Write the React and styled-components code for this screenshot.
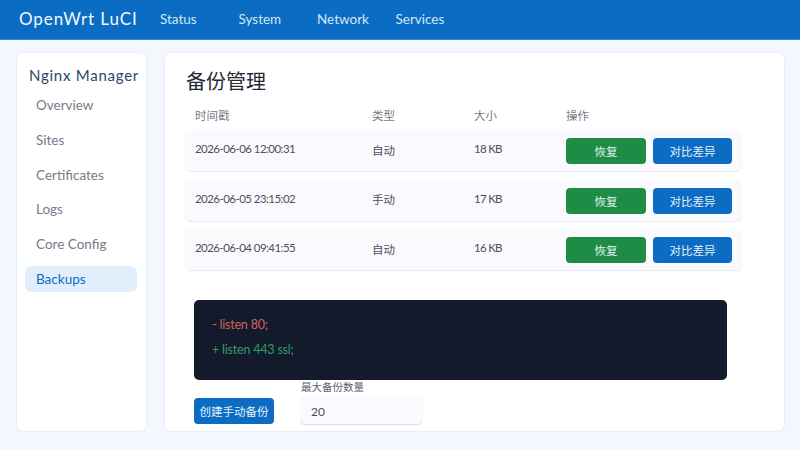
import React from 'react';
import styled, { createGlobalStyle } from 'styled-components';

const GlobalStyle = createGlobalStyle`
    html, body {
        margin: 0;
        padding: 0;
        background: #f4f7fe;
    }
    body {
        font-family: Lato, "Noto Sans CJK SC", sans-serif;
        color: #1f2937;
    }
    * {
        box-sizing: border-box;
    }
`

const Page = styled.div`
    width: 800px;
    height: 450px;
    overflow: hidden;
`

const TopBar = styled.header`
    display: flex;
    align-items: center;
    height: 40px;
    padding: 0 0 2px 19px;
    background: #0a6cc3;
    border-bottom: 1px solid #2f86d3;
    color: #f3f8fd;
`

const Brand = styled.div`
    width: 141px;
    font-size: 17px;
    letter-spacing: 0.9px;
`

const NavItem = styled.a`
    width: 78.5px;
    font-size: 13.5px;
    color: #d3e5f6;
`

const Body = styled.div`
    display: flex;
    gap: 19px;
    padding: 13px 16px 0 17px;
`

const Sidebar = styled.aside`
    display: flex;
    flex-direction: column;
    width: 129px;
    height: 378px;
    padding: 13px 9px 0 8px;
    background: #fff;
    border-radius: 6px;
    box-shadow: 0 0 2px rgba(120, 130, 170, 0.25);
`

const SideTitle = styled.h2`
    margin: 0 0 8px 4px;
    font-size: 15px;
    font-weight: 400;
    white-space: nowrap;
    letter-spacing: 0.75px;
    color: #2b4668;
    line-height: 18px;
`

const SideItem = styled.div`
    display: flex;
    align-items: center;
    height: 26px;
    margin-bottom: 8.75px;
    padding-left: 11px;
    border-radius: 6px;
    font-size: 13.5px;
    color: ${props => props.$active ? '#0b6cc2' : '#767c88'};
    background: ${props => props.$active ? '#e1effd' : 'transparent'};
`

const Main = styled.main`
    width: 619px;
    height: 378px;
    padding: 16px 42px 0 20px;
    background: #fff;
    border-radius: 6px;
    box-shadow: 0 0 2px rgba(120, 130, 170, 0.25);
`

const Title = styled.h1`
    margin: 0 0 14px 1px;
    font-size: 20px;
    font-weight: 400;
    line-height: 24px;
    color: #252b36;
`

const Columns = styled.div`
    display: grid;
    grid-template-columns: 177px 102px 92px 1fr;
    align-items: center;
    padding-left: 10px;
`

const HeadRow = styled(Columns)`
    height: 16px;
    margin-bottom: 8px;
    font-size: 11.5px;
    color: #767c88;
`

const Row = styled(Columns)`
    height: 40px;
    margin-bottom: 9.5px;
    background: #fafafe;
    border-radius: 6px;
    box-shadow: 0 1px 1px rgba(120, 130, 170, 0.14), 0 0 1px rgba(120, 130, 170, 0.16);
    font-size: 11.5px;
    color: #4a505c;
`

const Cell = styled.span`
    margin-bottom: 3px;
    font-size: 11.5px;
`

const NumericCell = styled(Cell)`
    margin-bottom: 5px;
    letter-spacing: ${props => props.$tight ? '-0.7px' : '-0.55px'};
`

const Actions = styled.div`
    display: flex;
    gap: 7px;
`

const Button = styled.button`
    width: ${props => props.$wide ? '80px' : '79px'};
    height: 26px;
    padding: 0;
    border: 0;
    border-radius: 4px;
    font-family: inherit;
    font-size: 11.5px;
    color: #e6f1f8;
    background: ${props => props.$green ? '#1e8c45' : '#0a6cc3'};
`

const DiffBlock = styled.div`
    width: 533px;
    height: 80px;
    margin: 30px 0 1px 9px;
    padding: 12px 18px;
    border-radius: 5px;
    background: #131a2c;
    font-size: 12.5px;
    letter-spacing: -0.2px;
    line-height: 25px;
`

const DiffLine = styled.div`
    color: ${props => props.$added ? '#2f9e62' : '#d9605c'};
`

const Controls = styled.div`
    display: flex;
    align-items: flex-end;
    gap: 27px;
    margin-left: 9px;
`

const Field = styled.div`
    display: flex;
    flex-direction: column;
    gap: 5px;
`

const FieldLabel = styled.label`
    font-size: 10.5px;
    line-height: 12px;
    color: #5c6370;
`

const Input = styled.input`
    width: 121px;
    height: 26px;
    padding: 0 10px;
    border: 0;
    border-radius: 4px;
    outline: none;
    font-family: inherit;
    font-size: 12px;
    color: #4a505c;
    background: #f9f9fe;
    box-shadow: 0 1px 1px rgba(110, 120, 170, 0.22), 0 0 1px rgba(110, 120, 170, 0.3);
`

const navItems = ['Status', 'System', 'Network', 'Services'];
const sideItems = ['Overview', 'Sites', 'Certificates', 'Logs', 'Core Config', 'Backups'];
const backups = [
    { time: '2026-06-06 12:00:31', type: '自动', size: '18 KB' },
    { time: '2026-06-05 23:15:02', type: '手动', size: '17 KB' },
    { time: '2026-06-04 09:41:55', type: '自动', size: '16 KB' },
];

const App = () => {
    return (
        <Page>
            <GlobalStyle />
            <TopBar>
                <Brand>OpenWrt LuCI</Brand>
                {navItems.map(item => <NavItem key={item}>{item}</NavItem>)}
            </TopBar>
            <Body>
                <Sidebar>
                    <SideTitle>Nginx Manager</SideTitle>
                    {sideItems.map(item => (
                        <SideItem key={item} $active={item === 'Backups'}>{item}</SideItem>
                    ))}
                </Sidebar>
                <Main>
                    <Title>备份管理</Title>
                    <HeadRow>
                        <span>时间戳</span>
                        <span>类型</span>
                        <span>大小</span>
                        <span>操作</span>
                    </HeadRow>
                    {backups.map(b => (
                        <Row key={b.time}>
                            <NumericCell>{b.time}</NumericCell>
                            <Cell>{b.type}</Cell>
                            <NumericCell $tight>{b.size}</NumericCell>
                            <Actions>
                                <Button $green $wide>恢复</Button>
                                <Button>对比差异</Button>
                            </Actions>
                        </Row>
                    ))}
                    <DiffBlock>
                        <DiffLine>- listen 80;</DiffLine>
                        <DiffLine $added>+ listen 443 ssl;</DiffLine>
                    </DiffBlock>
                    <Controls>
                        <Button $wide>创建手动备份</Button>
                        <Field>
                            <FieldLabel>最大备份数量</FieldLabel>
                            <Input defaultValue="20" />
                        </Field>
                    </Controls>
                </Main>
            </Body>
        </Page>
    );
}

export default App;
